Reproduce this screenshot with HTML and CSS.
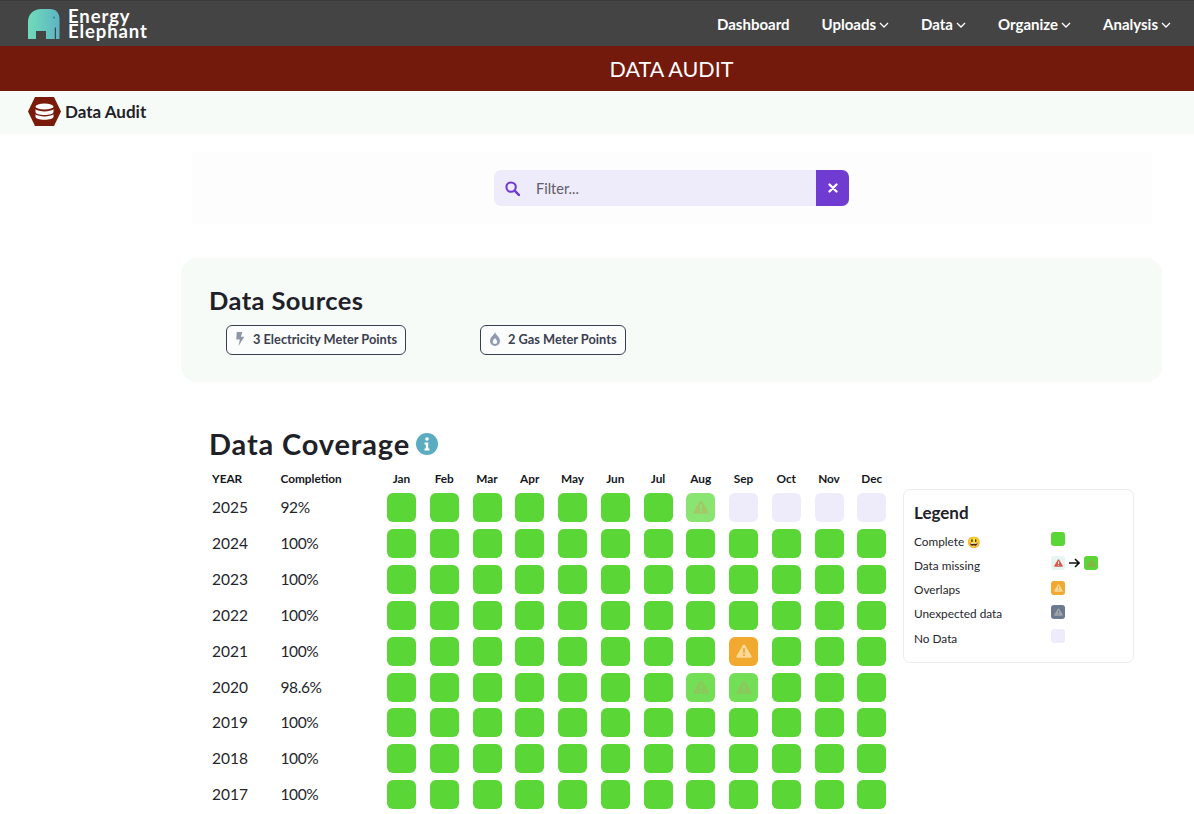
FILE: index.html
```html
<!DOCTYPE html>
<html lang="en">
<head>
<meta charset="utf-8">
<title>Data Audit</title>
<link rel="stylesheet" href="styles.css">
</head>
<body>
<svg class="defs" width="0" height="0" aria-hidden="true">
  <defs>
    <symbol id="warn" viewBox="0 0 16 14">
      <path d="M8 .6c.5 0 .9.3 1.2.7l6.300 10.600c.5.900-.1 1.900-1.200 1.900H1.700C.6 13.800 0 12.800.5 11.900L6.800 1.300C7.100.9 7.500.6 8 .6z" fill="currentColor"/>
      <rect class="warn-mark" x="7.100" y="4" width="1.800" height="5" rx=".6"/>
      <circle class="warn-mark" cx="8" cy="11" r="1.100"/>
    </symbol>
  </defs>
</svg>
<header class="topbar">
  <a class="brand">
    <svg class="brand-mark" viewBox="0 0 32 30" aria-hidden="true">
      <defs><linearGradient id="eg" x1="0" y1="0" x2="1" y2="0"><stop offset="0" stop-color="#6fdcb8"/><stop offset="1" stop-color="#5db4c4"/></linearGradient></defs>
      <path d="M0 30V13C0 5 6 0 13 0h9c6 0 9.500 4 9.500 10v20H28V18.500h-1.200V30H18v-8H8v8z" fill="url(#eg)"/>
      <circle cx="26" cy="8.500" r=".9" fill="#2f7f88"/>
    </svg>
    <span class="brand-text">Energy<br>Elephant</span>
  </a>
  <nav class="nav">
    <a class="nav-link">Dashboard</a>
    <a class="nav-link">Uploads<svg class="chev" viewBox="0 0 10 6"><path d="M1 1l4 4 4-4"/></svg></a>
    <a class="nav-link">Data<svg class="chev" viewBox="0 0 10 6"><path d="M1 1l4 4 4-4"/></svg></a>
    <a class="nav-link">Organize<svg class="chev" viewBox="0 0 10 6"><path d="M1 1l4 4 4-4"/></svg></a>
    <a class="nav-link">Analysis<svg class="chev" viewBox="0 0 10 6"><path d="M1 1l4 4 4-4"/></svg></a>
  </nav>
</header>
<div class="banner">DATA AUDIT</div>
<div class="crumb">
  <svg class="crumb-icon" viewBox="0 0 33 29" aria-hidden="true">
    <path d="M7 0h19l7 14.500L26 29H7L0 14.500z" fill="#7a1a0b"/>
    <ellipse cx="16.500" cy="9.500" rx="9" ry="3" fill="#fff"/>
    <path d="M7.500 12.300c2 1.500 5.300 2.100 9 2.100s7-.6 9-2.100v2.700c0 1.700-4 3-9 3s-9-1.300-9-3z" fill="#fff"/>
    <path d="M7.500 17.300c2 1.500 5.300 2.100 9 2.100s7-.6 9-2.100v2.400c0 1.700-4 3-9 3s-9-1.300-9-3z" fill="#fff"/>
  </svg>
  <span class="crumb-text">Data Audit</span>
</div>
<main class="main">
  <section class="filter-panel">
    <div class="search">
      <svg class="search-icon" viewBox="0 0 16 16" aria-hidden="true"><circle cx="6.500" cy="6.500" r="5" fill="none" stroke="#6f3bd1" stroke-width="2.200"/><path d="M10.300 10.300L15 15" stroke="#6f3bd1" stroke-width="2.600" stroke-linecap="round"/></svg>
      <span class="search-text">Filter...</span>
      <span class="search-clear"><svg viewBox="0 0 10 10" aria-hidden="true"><path d="M1.500 1.500l7 7M8.500 1.500l-7 7" stroke="#fff" stroke-width="2.300" stroke-linecap="round"/></svg></span>
    </div>
  </section>
  <section class="sources">
    <h2 class="h-lg h-src">Data Sources</h2>
    <div class="chips">
      <span class="chip chip-elec"><svg class="chip-icon" viewBox="0 0 10 15"><path d="M1.500 0h6L6 5h3.500L3.500 15 4.800 8H1z" fill="#8e96a8"/></svg>3 Electricity Meter Points</span>
      <span class="chip chip-gas"><svg class="chip-icon" viewBox="0 0 10 14"><path fill-rule="evenodd" d="M5 0c.5 2.500 5 5 5 9a5 5 0 0 1-10 0C0 5 4.500 2.500 5 0zM5 6C4 7.500 2.700 8.300 2.700 9.800a2.300 2.300 0 0 0 4.600 0C7.300 8.300 6 7.500 5 6z" fill="#8e9bb0"/></svg>2 Gas Meter Points</span>
    </div>
  </section>
  <section class="coverage">
    <h2 class="h-lg h-cov">Data Coverage
      <svg class="info" viewBox="0 0 22 22" aria-hidden="true"><circle cx="11" cy="11" r="11" fill="#5bacc0"/><circle cx="11" cy="6" r="1.800" fill="#fff"/><path d="M8.500 9.500h3.700v6h1.300v2h-5v-2h1.300v-4H8.500z" fill="#fff"/></svg>
    </h2>
    <div class="cov-body">
      <div class="grid" id="grid">
        <div class="gh gh-year">YEAR</div><div class="gh gh-comp">Completion</div>
        <div class="gh gm">Jan</div><div class="gh gm">Feb</div><div class="gh gm">Mar</div><div class="gh gm">Apr</div><div class="gh gm">May</div><div class="gh gm">Jun</div><div class="gh gm">Jul</div><div class="gh gm">Aug</div><div class="gh gm">Sep</div><div class="gh gm">Oct</div><div class="gh gm">Nov</div><div class="gh gm">Dec</div>

        <div class="yr">2025</div><div class="pc">92%</div>
        <div class="c g"></div><div class="c g"></div><div class="c g"></div><div class="c g"></div><div class="c g"></div><div class="c g"></div><div class="c g"></div>
        <div class="c p1"><svg class="w"><use href="#warn"/></svg></div><div class="c n"></div><div class="c n"></div><div class="c n"></div><div class="c n"></div>

        <div class="yr">2024</div><div class="pc">100%</div>
        <div class="c g"></div><div class="c g"></div><div class="c g"></div><div class="c g"></div><div class="c g"></div><div class="c g"></div><div class="c g"></div><div class="c g"></div><div class="c g"></div><div class="c g"></div><div class="c g"></div><div class="c g"></div>

        <div class="yr">2023</div><div class="pc">100%</div>
        <div class="c g"></div><div class="c g"></div><div class="c g"></div><div class="c g"></div><div class="c g"></div><div class="c g"></div><div class="c g"></div><div class="c g"></div><div class="c g"></div><div class="c g"></div><div class="c g"></div><div class="c g"></div>

        <div class="yr">2022</div><div class="pc">100%</div>
        <div class="c g"></div><div class="c g"></div><div class="c g"></div><div class="c g"></div><div class="c g"></div><div class="c g"></div><div class="c g"></div><div class="c g"></div><div class="c g"></div><div class="c g"></div><div class="c g"></div><div class="c g"></div>

        <div class="yr">2021</div><div class="pc">100%</div>
        <div class="c g"></div><div class="c g"></div><div class="c g"></div><div class="c g"></div><div class="c g"></div><div class="c g"></div><div class="c g"></div><div class="c g"></div>
        <div class="c o"><svg class="w"><use href="#warn"/></svg></div><div class="c g"></div><div class="c g"></div><div class="c g"></div>

        <div class="yr">2020</div><div class="pc">98.6%</div>
        <div class="c g"></div><div class="c g"></div><div class="c g"></div><div class="c g"></div><div class="c g"></div><div class="c g"></div><div class="c g"></div>
        <div class="c p2"><svg class="w"><use href="#warn"/></svg></div><div class="c p2"><svg class="w"><use href="#warn"/></svg></div><div class="c g"></div><div class="c g"></div><div class="c g"></div>

        <div class="yr">2019</div><div class="pc">100%</div>
        <div class="c g"></div><div class="c g"></div><div class="c g"></div><div class="c g"></div><div class="c g"></div><div class="c g"></div><div class="c g"></div><div class="c g"></div><div class="c g"></div><div class="c g"></div><div class="c g"></div><div class="c g"></div>

        <div class="yr">2018</div><div class="pc">100%</div>
        <div class="c g"></div><div class="c g"></div><div class="c g"></div><div class="c g"></div><div class="c g"></div><div class="c g"></div><div class="c g"></div><div class="c g"></div><div class="c g"></div><div class="c g"></div><div class="c g"></div><div class="c g"></div>

        <div class="yr">2017</div><div class="pc">100%</div>
        <div class="c g"></div><div class="c g"></div><div class="c g"></div><div class="c g"></div><div class="c g"></div><div class="c g"></div><div class="c g"></div><div class="c g"></div><div class="c g"></div><div class="c g"></div><div class="c g"></div><div class="c g"></div>
      </div>
      <aside class="legend">
        <h3 class="legend-title">Legend</h3>
        <div class="lg-row"><span class="lg-label">Complete <span class="emoji">😃</span></span><span class="lg-sw g"></span></div>
        <div class="lg-row"><span class="lg-label">Data missing</span><span class="lg-sw m"><svg class="lw"><use href="#warn"/></svg></span><svg class="arrow" viewBox="0 0 11 10" aria-hidden="true"><path d="M0 5h9.500M6 1l4 4-4 4" fill="none" stroke="#111" stroke-width="1.600"/></svg><span class="lg-sw g gw"><svg class="lw"><use href="#warn"/></svg></span></div>
        <div class="lg-row"><span class="lg-label">Overlaps</span><span class="lg-sw o"><svg class="lw"><use href="#warn"/></svg></span></div>
        <div class="lg-row"><span class="lg-label">Unexpected data</span><span class="lg-sw u"><svg class="lw"><use href="#warn"/></svg></span></div>
        <div class="lg-row"><span class="lg-label">No Data</span><span class="lg-sw n"></span></div>
      </aside>
    </div>
  </section>
</main>
</body>
</html>
```
FILE: styles.css
```css
* { box-sizing: border-box; }
html, body { margin: 0; padding: 0; }
body {
  width: 1194px;
  height: 814px;
  overflow: hidden;
  background: #fff;
  color: #1f2128;
  font-family: Lato, "Noto Sans", sans-serif;
}
.defs { position: absolute; }

.topbar {
  height: 46px;
  background: #444;
  border-top: 1px solid #3b3b3b;
  display: flex;
  justify-content: space-between;
  align-items: center;
  padding: 0 23px 0 28px;
}
.brand { display: flex; align-items: center; gap: 8px; }
.brand-mark { width: 32px; height: 30px; display: block; }
.brand-text {
  color: #fff;
  font: 700 18.500px/15px Lato, sans-serif;
  letter-spacing: .9px;
}
.nav { display: flex; gap: 32px; padding-top: 1px; }
.nav-link {
  color: #fff;
  font-size: 15px;
  font-weight: 700;
  display: flex;
  align-items: center;
  gap: 3px;
}
.chev { width: 10px; height: 6px; margin-top: 2px; fill: none; stroke: #fff; stroke-width: 1.300; }

.banner {
  height: 45px;
  background: #731a0c;
  color: #fff;
  font-size: 21.500px;
  line-height: 47px;
  text-align: center;
  padding-left: 149px;
}
.crumb {
  height: 43px;
  background: #f6fbf8;
  display: flex;
  align-items: center;
  gap: 4px;
  padding: 0 0 2px 28px;
}
.crumb-icon { width: 33px; height: 29px; }
.crumb-text { font-size: 17px; font-weight: 700; }

.main { padding: 18px 32px 0 181px; }
.filter-panel {
  margin: 0 10px 0 11px;
  height: 72px;
  background: #fdfdfd;
  padding-top: 18px;
  display: flex;
  justify-content: center;
}
.search {
  width: 355px;
  height: 36px;
  margin-right: 1px;
  background: #eeebfa;
  border-radius: 7px;
  display: flex;
  align-items: center;
  overflow: hidden;
  padding-left: 11px;
}
.search-icon { width: 15px; height: 15px; }
.search-text { flex: 1; margin-left: 16px; font-size: 14.500px; color: #5d5c68; }
.search-clear {
  width: 33px;
  height: 36px;
  background: #6f3bd1;
  display: flex;
  align-items: center;
  justify-content: center;
}
.search-clear svg { width: 10px; height: 10px; }

.sources {
  margin-top: 34px;
  height: 124px;
  background: #f6fbf8;
  border-radius: 16px;
  padding: 27px 28px 0;
}
.h-lg { margin: 0; line-height: 30px; font-weight: 700; color: #1f2128; }
.h-src { font-size: 25.500px; letter-spacing: .4px; }
.chips { display: flex; margin: 10px 0 0 17px; gap: 74px; }
.chip {
  height: 30px;
  border: 1px solid #3b4050;
  border-radius: 6px;
  display: inline-flex;
  align-items: center;
  padding-bottom: 2px;
  font-size: 12.800px;
  font-weight: 700;
  color: #3b4050;
  background: #fafdfc;
}
.chip-elec { width: 180px; padding-left: 8px; gap: 8px; }
.chip-gas { width: 146px; padding-left: 9px; gap: 8px; }
.chip-icon { width: 10px; height: 14px; flex: none; }

.coverage { padding: 47px 0 0 28px; }
.h-cov { display: flex; align-items: center; gap: 6px; font-size: 29px; letter-spacing: .85px; }
.info { width: 22px; height: 22px; }
.cov-body { display: flex; align-items: flex-start; }
.grid {
  display: grid;
  grid-template-columns: 68.500px 106.500px repeat(12, 42.750px);
  grid-template-rows: 14px repeat(9, 29px);
  row-gap: 6.930px;
  margin: 13px 0 0 3px;
  width: 688px;
}
.gh { font-size: 11.800px; font-weight: 700; line-height: 14px; color: #15171c; }
.gm { width: 29px; text-align: center; }
.yr, .pc { font-size: 15.500px; line-height: 29px; color: #24262c; }
.pc { letter-spacing: -.4px; }
.c {
  width: 29px;
  height: 29px;
  border-radius: 6px;
  display: flex;
  align-items: center;
  justify-content: center;
}
.g { background: #5ad636; }
.n { background: #eeebfa; }
.o { background: #f2a92f; color: #fad898; --mark: #f2a92f; }
.p1 { background: #8ae472; color: #a4c868; --mark: #8ae472; }
.p2 { background: #72df57; color: #8cc85c; --mark: #72df57; }
.w { width: 16px; height: 14px; }
.warn-mark { fill: var(--mark, #fff); }

.legend {
  margin: 30px 0 0 3px;
  width: 231px;
  height: 174px;
  border: 1px solid #e9edf1;
  border-radius: 7px;
  padding: 13px 10px 0;
  background: #fff;
}
.legend-title { margin: 0 0 6px; font-size: 17px; line-height: 20px; font-weight: 700; }
.lg-row { display: flex; align-items: center; height: 24.250px; }
.lg-label { width: 137px; font-size: 11.800px; color: #24262c; }
.emoji { font-size: 11px; }
.lg-sw { width: 14px; height: 14px; border-radius: 3px; display: flex; align-items: center; justify-content: center; margin-top: -4px; }
.lw { width: 9px; height: 8px; }
.m { background: #e6f5ef; color: #e0554d; --mark: #e6f5ef; }
.gw { color: #8cb048; --mark: #5ad636; }
.u { background: #6c7a8f; color: #a3a5ad; --mark: #6c7a8f; }
.arrow { width: 11px; height: 10px; margin: -4px 4px 0 4px; }
```
